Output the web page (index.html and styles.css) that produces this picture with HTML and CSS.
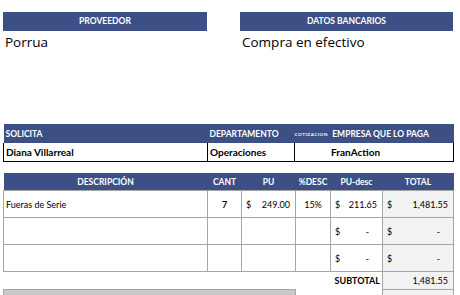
FILE: index.html
```html
<!DOCTYPE html>
<html lang="es">
<head>
    <meta charset="UTF-8">
    <meta name="viewport" content="width=device-width, initial-scale=1.0">
    <title>Orden de compra</title>
    <link rel="stylesheet" href="styles.css">
</head>
<body>

    <div class="hoja">

        <div class="arriba">
            <section class="bloque">
                <div class="barra">PROVEEDOR</div>
                <p class="grande">Porrua</p>
            </section>
            <section class="bloque">
                <div class="barra">DATOS BANCARIOS</div>
                <p class="grande">Compra en efectivo</p>
            </section>
        </div>

        <table class="solicita">
            <colgroup>
                <col class="c-sol">
                <col class="c-dep">
                <col class="c-emp">
            </colgroup>
            <tr class="cabeza">
                <th>SOLICITA</th>
                <th>DEPARTAMENTO</th>
                <th class="emp-cab"><span class="cotiza">COTIZACION</span> EMPRESA QUE LO PAGA</th>
            </tr>
            <tr class="datos">
                <td>Diana Villarreal</td>
                <td>Operaciones</td>
                <td class="empresa">FranAction</td>
            </tr>
        </table>

        <table class="partidas">
            <colgroup>
                <col class="c-desc">
                <col class="c-cant">
                <col class="c-pu">
                <col class="c-pct">
                <col class="c-pud">
                <col class="c-tot">
            </colgroup>
            <thead>
                <tr>
                    <th>DESCRIPCIÓN</th><th>CANT</th><th>PU</th><th>%DESC</th><th>PU-desc</th><th>TOTAL</th>
                </tr>
            </thead>
            <tbody>
                <tr class="fila">
                    <td>Fueras de Serie</td>
                    <td class="cant">7</td>
                    <td><div class="moneda"><span>$</span><span>249.00</span></div></td>
                    <td class="centro">15%</td>
                    <td><div class="moneda"><span>$</span><span>211.65</span></div></td>
                    <td class="gris"><div class="moneda"><span>$</span><span>1,481.55</span></div></td>
                </tr>
                <tr class="fila">
                    <td></td><td></td><td></td><td></td>
                    <td><div class="moneda"><span>$</span><span class="guion">-</span></div></td>
                    <td class="gris"><div class="moneda"><span>$</span><span class="guion">-</span></div></td>
                </tr>
                <tr class="fila">
                    <td></td><td></td><td></td><td></td>
                    <td><div class="moneda"><span>$</span><span class="guion">-</span></div></td>
                    <td class="gris"><div class="moneda"><span>$</span><span class="guion">-</span></div></td>
                </tr>
                <tr class="subtotal">
                    <td class="vacio"></td><td class="vacio"></td><td class="vacio"></td><td class="vacio"></td>
                    <td class="etiqueta">SUBTOTAL</td>
                    <td class="gris derecha">1,481.55</td>
                </tr>
                <tr class="pie">
                    <td class="relleno" colspan="3"></td>
                    <td class="vacio"></td><td class="vacio"></td>
                    <td class="gris"></td>
                </tr>
            </tbody>
        </table>

    </div>

</body>
</html>
```

FILE: styles.css
```css
body {
    margin: 0;
    background: white;
    font-family: Lato, "Liberation Sans", sans-serif;
    color: black;
}

.hoja {
    padding: 12px 0 0 3px;
    width: 450px;
}

/* proveedor / datos bancarios */
.arriba {
    display: grid;
    grid-template-columns: 204px 213px;
    column-gap: 33px;
    height: 112px;
}

.barra {
    height: 19px;
    line-height: 19px;
    background: #3d5086;
    color: white;
    font-size: 8.5px;
    font-weight: bold;
    text-align: center;
}

.grande {
    margin: 2px 0 0 2px;
    font-family: "Open Sans", sans-serif;
    font-size: 13.5px;
}

/* solicita */
table {
    border-collapse: collapse;
    table-layout: fixed;
}

.solicita {
    width: 450px;
}

.c-sol { width: 204px; }
.c-dep { width: 87px; }
.c-emp { width: 159px; }

.solicita .cabeza th {
    height: 19px;
    padding: 0 0 0 2px;
    background: #3d5086;
    color: white;
    font-size: 8.5px;
    text-align: left;
    white-space: nowrap;
}

.cotiza {
    font-size: 4.5px;
    letter-spacing: 0.6px;
    margin-right: 2px;
    vertical-align: 1px;
}

.emp-cab {
    padding-left: 0 !important;
}

.solicita .datos td {
    height: 18px;
    padding: 0 0 0 2px;
    border: 1px solid black;
    border-top: none;
    font-size: 10px;
    font-weight: bold;
}

.solicita .datos td.empresa {
    padding-left: 36px;
}

/* partidas */
.partidas {
    margin-top: 11px;
    width: 450px;
    font-size: 9px;
}

.c-desc { width: 204px; }
.c-cant { width: 34px; }
.c-pu { width: 54px; }
.c-pct { width: 35px; }
.c-pud { width: 52px; }
.c-tot { width: 71px; }

.partidas th {
    height: 17px;
    padding: 0;
    background: #3d5086;
    color: white;
    font-size: 8.5px;
}

.partidas td {
    padding: 0 2px;
    border: 1px solid #a6a6a6;
}

.fila td {
    height: 26px;
}

.cant {
    text-align: center;
    font-weight: bold;
}

.centro {
    text-align: center;
}

.moneda {
    display: flex;
    justify-content: space-between;
    padding: 0 3px 0 2px;
}

.guion {
    padding-right: 8px;
}

.gris {
    background: #f2f2f2;
}

.derecha {
    text-align: right;
    padding-right: 5px !important;
}

.subtotal td {
    height: 17px;
}

.partidas td.vacio {
    border: none;
}

.partidas td.etiqueta {
    border: none;
    text-align: right;
    font-weight: bold;
    padding-right: 2px;
}

.pie td {
    height: 6px;
}

.partidas td.relleno {
    background: #c9c9c9;
    border: 1px solid #a6a6a6;
    border-bottom: none;
}

.partidas td.gris:last-child {
    border-bottom: none;
}
```
